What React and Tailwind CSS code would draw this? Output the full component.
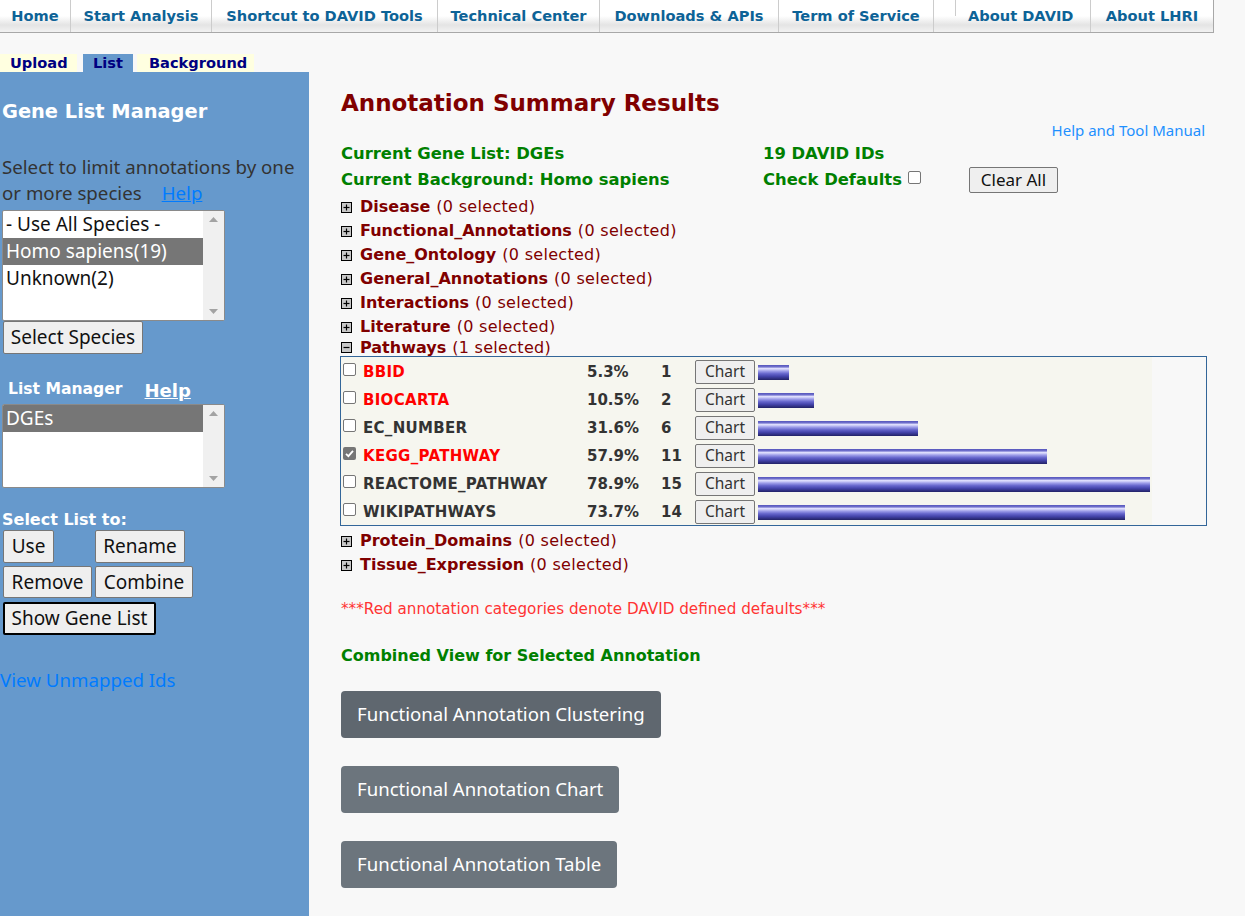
import React from "react";

const V = { fontFamily: '"DejaVu Sans", Verdana, sans-serif' };
const S = { fontFamily: '"Noto Sans", "Open Sans", sans-serif' };

const navItems = [
  { label: "Home", cls: "w-[70px] justify-center" },
  { label: "Start Analysis", cls: "w-[141px] justify-center" },
  { label: "Shortcut to DAVID Tools", cls: "w-[226px] justify-center" },
  { label: "Technical Center", cls: "w-[162px] justify-center" },
  { label: "Downloads & APIs", cls: "w-[179px] justify-center" },
  { label: "Term of Service", cls: "w-[155px] justify-center" },
  { label: "About DAVID", cls: "w-[157px] justify-start pl-[34px]", tick: true },
  { label: "About LHRI", cls: "w-[123px] justify-center" },
];

function PlusBox({ minus }) {
  return (
    <svg width="11" height="11" viewBox="0 0 11 11" className="shrink-0">
      <rect x="0.5" y="0.5" width="10" height="10" fill="#c8c8c8" stroke="#000" />
      <line x1="2.5" y1="5.5" x2="8.5" y2="5.5" stroke="#000" strokeWidth="1.2" />
      {!minus && <line x1="5.5" y1="2.5" x2="5.5" y2="8.5" stroke="#000" strokeWidth="1.2" />}
    </svg>
  );
}

function Category({ name, n, minus, cls }) {
  return (
    <div className={"flex items-center " + cls} style={V}>
      <PlusBox minus={minus} />
      <span className="ml-[8px] text-[16px] font-bold text-[#800000]">{name}</span>
      <span className="ml-[6px] text-[16px] tracking-[0.3px] text-[#800000]">({n} selected)</span>
    </div>
  );
}

function Checkbox({ checked }) {
  if (checked) {
    return (
      <div className="w-[13px] h-[13px] rounded-[2px] bg-[#767676] flex items-center justify-center">
        <svg width="11" height="11" viewBox="0 0 11 11">
          <path d="M2 5.8 L4.4 8.2 L9 2.8" fill="none" stroke="#fff" strokeWidth="1.8" />
        </svg>
      </div>
    );
  }
  return <div className="w-[13px] h-[13px] rounded-[2px] border border-[#767676] bg-white" />;
}

const rows = [
  { name: "BBID", red: true, pct: "5.3%", n: "1", w: 31 },
  { name: "BIOCARTA", red: true, pct: "10.5%", n: "2", w: 56 },
  { name: "EC_NUMBER", red: false, pct: "31.6%", n: "6", w: 160 },
  { name: "KEGG_PATHWAY", red: true, pct: "57.9%", n: "11", w: 289, checked: true },
  { name: "REACTOME_PATHWAY", red: false, pct: "78.9%", n: "15", w: 392 },
  { name: "WIKIPATHWAYS", red: false, pct: "73.7%", n: "14", w: 367 },
];

function Scrollbar() {
  return (
    <div className="w-[21px] bg-[#f0f0f0] flex flex-col justify-between items-center py-[6px]">
      <svg width="9" height="5" viewBox="0 0 9 5"><path d="M0 5 L4.5 0 L9 5 Z" fill="#a3a3a3" /></svg>
      <svg width="9" height="5" viewBox="0 0 9 5"><path d="M0 0 L4.5 5 L9 0 Z" fill="#a3a3a3" /></svg>
    </div>
  );
}

function Btn({ children, cls }) {
  return (
    <div
      className={"flex items-center justify-center bg-[#efefef] border border-[#767676] rounded-[2px] text-[19px] text-[#111] " + cls}
      style={S}
    >
      {children}
    </div>
  );
}

export default function App() {
  return (
    <div className="min-h-[916px] bg-[#f8f8f8] flex flex-col">
      {/* nav */}
      <div className="flex h-[33px] w-[1214px] border-b border-r border-[#a8a8a8] bg-[linear-gradient(to_bottom,#ffffff_0%,#ffffff_50%,#e4e4e4_78%,#f2f2f2_100%)]">
        {navItems.map((it, i) => (
          <div
            key={i}
            className={"relative flex items-center h-full text-[14.6px] font-bold text-[#0d6397] " + (i > 0 ? "border-l border-[#cccccc] " : "") + it.cls}
            style={V}
          >
            {it.tick && <div className="absolute left-[21px] top-0 h-[16px] w-px bg-[#cccccc]" />}
            {it.label}
          </div>
        ))}
      </div>

      <div className="flex flex-1">
        {/* left column */}
        <div className="w-[309px] shrink-0 flex flex-col">
          <div className="mt-[21px] h-[18px] flex text-[14.6px] font-bold text-[#000080]" style={V}>
            <div className="w-[77px] bg-[#ffffe0] pl-[10px] flex items-center">Upload</div>
            <div className="w-[6px]" />
            <div className="w-[50px] bg-[#6699cc] flex items-center justify-center">List</div>
            <div className="w-[4px]" />
            <div className="w-[117px] bg-[#ffffe0] pl-[12px] flex items-center">Background</div>
          </div>
          <div className="flex-1 bg-[#6699cc] pl-[2px] pt-[28px]">
            <div className="text-[19.4px] font-bold text-white leading-[24px]" style={V}>Gene List Manager</div>
            <div className="mt-[30px] text-[18.7px] leading-[26px] text-[#333]" style={S}>
              Select to limit annotations by one or more species
              <span className="ml-[20px] text-[#007bff] underline">Help</span>
            </div>
            <div className="mt-[4px] w-[223px] h-[111px] border border-[#8a8a8a] rounded-[2px] bg-white flex overflow-hidden">
              <div className="flex-1 text-[19px] text-[#111]" style={S}>
                <div className="h-[27px] flex items-center pl-[3px]">- Use All Species -</div>
                <div className="h-[27px] flex items-center pl-[3px] bg-[#767676] text-white">Homo sapiens(19)</div>
                <div className="h-[27px] flex items-center pl-[3px]">Unknown(2)</div>
              </div>
              <Scrollbar />
            </div>
            <Btn cls="ml-[1px] w-[140px] h-[33px]">Select Species</Btn>

            <div className="mt-[24px] flex items-center h-[24px]">
              <span className="ml-[6px] text-[15.6px] font-bold text-white" style={V}>List Manager</span>
              <span className="ml-[22px] text-[18px] font-bold text-white underline" style={V}>Help</span>
            </div>
            <div className="mt-[2px] w-[223px] h-[84px] border border-[#8a8a8a] rounded-[2px] bg-white flex overflow-hidden">
              <div className="flex-1 text-[19px]" style={S}>
                <div className="h-[27px] flex items-center pl-[3px] bg-[#767676] text-white">DGEs</div>
              </div>
              <Scrollbar />
            </div>

            <div className="mt-[22px] text-[16px] font-bold text-white leading-[20px]" style={V}>Select List to:</div>
            <div className="flex flex-col gap-[3px] ml-[1px]">
              <div className="flex">
                <Btn cls="w-[51px] h-[33px]">Use</Btn>
                <Btn cls="ml-[41px] w-[90px] h-[33px]">Rename</Btn>
              </div>
              <div className="flex gap-[3px]">
                <Btn cls="w-[89px] h-[32px]">Remove</Btn>
                <Btn cls="w-[98px] h-[32px]">Combine</Btn>
              </div>
              <div className="flex mt-[1px]">
                <Btn cls="w-[153px] h-[33px] !border-2 !border-black">Show Gene List</Btn>
              </div>
            </div>
            <div className="mt-[31px] -ml-[2px] text-[18.7px] text-[#007bff]" style={S}>View Unmapped Ids</div>
          </div>
        </div>

        {/* main */}
        <div className="flex-1 min-w-0 pl-[32px] pr-[40px] pt-[56px]">
          <div className="text-[23px] font-bold text-[#800000] leading-[28px]" style={V}>Annotation Summary Results</div>
          <div className="text-right text-[15px] text-[#1e90ff] leading-[20px] mt-[3px]" style={S}>Help and Tool Manual</div>
          <div className="flex mt-[1px]" style={V}>
            <div className="w-[422px] text-[16.4px] font-bold text-[#008000]">
              <div className="h-[26px] flex items-center">Current Gene List: DGEs</div>
              <div className="h-[26px] flex items-center">Current Background: Homo sapiens</div>
            </div>
            <div className="text-[16.4px] font-bold text-[#008000]">
              <div className="h-[26px] flex items-center">19 DAVID IDs</div>
              <div className="h-[26px] flex items-center">
                Check Defaults
                <div className="ml-[6px] -mt-[5px]"><Checkbox /></div>
                <Btn cls="ml-[48px] w-[89px] h-[26px] !text-[17px] font-normal">Clear All</Btn>
              </div>
            </div>
          </div>

          <div className="mt-[2px]">
            {["Disease", "Functional_Annotations", "Gene_Ontology", "General_Annotations", "Interactions", "Literature"].map((c) => (
              <Category key={c} name={c} n="0" cls="h-[24px]" />
            ))}
            <Category name="Pathways" n="1" minus cls="h-[17px]" />
            <div className="-ml-[1px] w-[867px] border border-[#336699]">
              <div className="w-[811px] bg-[#f6f6ef]">
                {rows.map((r) => (
                  <div key={r.name} className="h-[28px] flex items-center pt-[2px]" style={V}>
                    <div className="ml-[2px] -mt-[6px]"><Checkbox checked={r.checked} /></div>
                    <div className={"ml-[7px] w-[224px] text-[15px] tracking-[0.3px] font-bold " + (r.red ? "text-[#ff0000]" : "text-[#333333]")}>{r.name}</div>
                    <div className="w-[74px] text-[15px] font-bold text-[#333]">{r.pct}</div>
                    <div className="w-[34px] text-[15px] font-bold text-[#333]">{r.n}</div>
                    <Btn cls="w-[60px] h-[24px] !text-[15.5px] !text-[#333]">Chart</Btn>
                    <div
                      className="ml-[3px] h-[15px] bg-[linear-gradient(to_bottom,#5555bb_0%,#7070cc_12%,#e4e4ff_24%,#a0a0ea_40%,#6666cc_58%,#4444aa_76%,#222266_100%)]"
                      style={{ width: r.w }}
                    />
                  </div>
                ))}
              </div>
            </div>
            <Category name="Protein_Domains" n="0" cls="h-[24px] mt-[3px]" />
            <Category name="Tissue_Expression" n="0" cls="h-[24px]" />
          </div>

          <div className="mt-[21px] text-[15.2px] text-[#ff3333]" style={V}>***Red annotation categories denote DAVID defined defaults***</div>
          <div className="mt-[23px] text-[16px] font-bold text-[#008000]" style={V}>Combined View for Selected Annotation</div>

          <div className="mt-[23px] flex flex-col items-start gap-[28px]" style={S}>
            <div className="h-[47px] px-[16px] flex items-center rounded-[4px] bg-[#5f676f] text-white text-[18.6px]">Functional Annotation Clustering</div>
            <div className="h-[47px] px-[16px] flex items-center rounded-[4px] bg-[#6c757d] text-white text-[18.6px]">Functional Annotation Chart</div>
            <div className="h-[47px] px-[16px] flex items-center rounded-[4px] bg-[#6c757d] text-white text-[18.6px]">Functional Annotation Table</div>
          </div>
        </div>
      </div>
    </div>
  );
}
